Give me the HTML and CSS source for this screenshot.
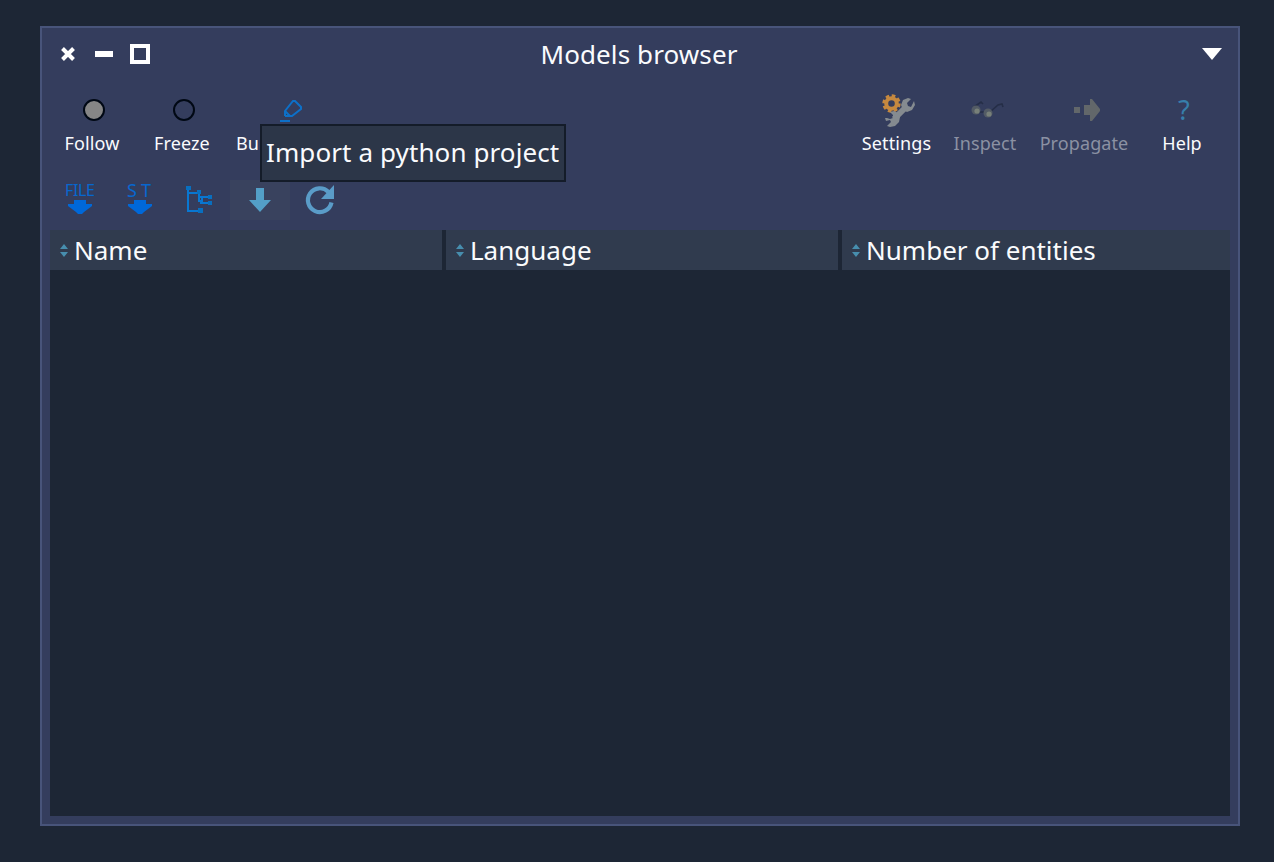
FILE: index.html
```
<!DOCTYPE html>
<html lang="en">
<head>
    <meta charset="UTF-8">
    <meta name="viewport" content="width=device-width, initial-scale=1.0">
    <title>Models browser</title>
    <link rel="stylesheet" href="styles.css">
</head>
<body>
    <div class="window">
        <header class="titlebar">
            <div class="window-controls">
                <svg width="16" height="16" viewBox="0 0 16 16"><path d="M2.500 2.500l11 11M13.500 2.500l-11 11" stroke="#fff" stroke-width="4"/></svg>
                <svg width="18" height="20" viewBox="0 0 18 20"><path d="M0 7h18v6H0z" fill="#fff"/></svg>
                <svg width="20" height="20" viewBox="0 0 20 20"><path d="M2 2h16v16H2z" fill="none" stroke="#fff" stroke-width="4"/></svg>
            </div>
            <h1>Models browser</h1>
            <svg class="window-menu" width="20" height="12" viewBox="0 0 20 12"><path d="M0 0h20L10 12z" fill="#fff"/></svg>
        </header>

        <nav class="toolbar">
            <button class="tool">
                <svg width="32" height="32" viewBox="0 0 32 32"><circle cx="16" cy="16" r="10" fill="#868686" stroke="#000814" stroke-width="2"/></svg>
                <span>Follow</span>
            </button>
            <button class="tool">
                <svg width="32" height="32" viewBox="0 0 32 32"><circle cx="16" cy="16" r="10" fill="none" stroke="#000814" stroke-width="2"/></svg>
                <span>Freeze</span>
            </button>
            <button class="tool tool-bus">
                <svg width="32" height="32" viewBox="0 0 32 32" fill="none" stroke="#0d70c8" stroke-width="2"><path d="M10 22v-5l8-10h2l6 6v2l-9 7h-7M10 17l5 5M5 27h10"/></svg>
                <span>Bu</span>
            </button>

            <button class="tool tool-right tool-settings">
                <svg width="34" height="34" viewBox="0 0 34 34">
                    <circle cx="9.500" cy="9.500" r="5.300" fill="none" stroke="#c6893f" stroke-width="4"/>
                    <circle cx="9.500" cy="9.500" r="7.900" fill="none" stroke="#c6893f" stroke-width="2.600" stroke-dasharray="3.600 2.605"/>
                    <path d="M12 25L25 12" stroke="#858b90" stroke-width="6"/>
                    <path d="M32 7l1 4-3 5-5 2-4-2-2-5 2-5 5-2 3 1-4 4 1 3 3 1zM5 24l3 1 3-1v-3l-3-3 4-1 4 2 2 4-1 5-4 4-5 1-3-1 4-4-1-2-4 1-1-3z" fill="#858b90"/>
                </svg>
                <span>Settings</span>
            </button>
            <button class="tool disabled">
                <svg width="34" height="32" viewBox="0 0 34 32">
                    <path d="M4 13l7-5 2 2M9 18h6M20 18l8-7 4-1 1 3" fill="none" stroke="#252e47" stroke-width="1.600"/>
                    <circle cx="6" cy="16" r="4.500" fill="#535b65"/><circle cx="18" cy="19" r="4.500" fill="#535b65"/>
                    <circle cx="7" cy="17" r="2.600" fill="#788079"/><circle cx="19" cy="20" r="2.600" fill="#788079"/>
                </svg>
                <span>Inspect</span>
            </button>
            <button class="tool tool-wide disabled">
                <svg width="32" height="32" viewBox="0 0 32 32"><path d="M4 13h6v6H4zM14 11h6V5h2l8 10v2l-8 10h-2v-6h-6z" fill="#62676a"/></svg>
                <span>Propagate</span>
            </button>
            <button class="tool tool-help">
                <b class="question">?</b>
                <span>Help</span>
            </button>
        </nav>

        <nav class="actions">
            <button class="action">
                <svg width="40" height="44" viewBox="-4 -6 40 44">
                    <text class="icon-text" x="1" y="12" textLength="30" lengthAdjust="spacing">FILE</text>
                    <path d="M10 16h12v4h6v2l-8 6-2 2h-4l-2-2-8-6v-2h6z" fill="#0068d9"/>
                </svg>
            </button>
            <button class="action">
                <svg width="40" height="44" viewBox="-4 -6 40 44">
                    <text class="icon-text wide" x="3" y="13">ST</text>
                    <path d="M10 16h12v4h6v2l-8 6-2 2h-4l-2-2-8-6v-2h6z" fill="#0068d9"/>
                </svg>
            </button>
            <button class="action">
                <svg width="32" height="32" viewBox="0 0 32 32">
                    <path d="M4 4v23h15M4 9h11M15 8v9h3M16 13h11M16 19h11M18 13v6" fill="none" stroke="#0877d2" stroke-width="2"/>
                    <path d="M2 2h5v4H2zM13 6h4v4h-4zM14 24h5v5h-5zM24 11h4v4h-4zM24 17h4v4h-4z" fill="#086fc0"/>
                </svg>
            </button>
            <button class="action hovered">
                <svg width="32" height="32" viewBox="0 0 32 32"><path d="M12 4h8v12h7L16 28 5 16h7z" fill="#539fc7"/></svg>
                <span class="tooltip">Import a python project</span>
            </button>
            <button class="action">
                <svg width="32" height="32" viewBox="0 0 32 32">
                    <path d="M27.500 18.500A11.900 11.900 0 1 1 24.500 8" fill="none" stroke="#5a9cc8" stroke-width="4.200"/>
                    <path d="M30 1v14H17z" fill="#5a9cc8"/>
                </svg>
            </button>
        </nav>

        <main class="models">
            <div class="models-header">
                <div class="column">
                    <svg width="8" height="16" viewBox="0 0 8 16"><path d="M0 7l4-5 4 5zM0 10h8l-4 5z" fill="#478eae"/></svg>
                    Name
                </div>
                <div class="column">
                    <svg width="8" height="16" viewBox="0 0 8 16"><path d="M0 7l4-5 4 5zM0 10h8l-4 5z" fill="#478eae"/></svg>
                    Language
                </div>
                <div class="column">
                    <svg width="8" height="16" viewBox="0 0 8 16"><path d="M0 7l4-5 4 5zM0 10h8l-4 5z" fill="#478eae"/></svg>
                    Number of entities
                </div>
            </div>
        </main>
    </div>
</body>
</html>
```
FILE: styles.css
```
:root {
    --desktop: #1d2635;
    --panel: #343d5d;
    --border: #48547a;
    --header: #303b4e;
    --text: #fafbfd;
}

* {
    margin: 0;
    padding: 0;
    box-sizing: border-box;
}

body {
    height: 100vh;
    padding: 26px 34px 36px 40px;
    background: var(--desktop);
    color: var(--text);
    font-family: "Noto Sans", sans-serif;
    overflow: hidden;
}

svg {
    display: block;
    flex: none;
}

button {
    border: none;
    background: none;
    color: inherit;
    font: inherit;
}

.window {
    display: flex;
    flex-direction: column;
    height: 100%;
    padding: 0 8px 8px;
    border: 2px solid var(--border);
    background: var(--panel);
}

.titlebar {
    display: grid;
    grid-template-columns: 1fr auto 1fr;
    align-items: center;
    height: 52px;
    padding: 0 8px 0 10px;
}

.titlebar h1 {
    margin-right: 4px;
    font-size: 26px;
    font-weight: 400;
    line-height: 36px;
    letter-spacing: 0.1px;
}

.window-controls {
    display: flex;
    align-items: center;
    gap: 17px;
}

.window-controls svg:first-child {
    margin-right: 2px;
}

.window-menu {
    justify-self: end;
}

.toolbar {
    display: flex;
    height: 100px;
    padding: 14px 4px 0 0;
    margin-left: -3px;
}

.tool {
    display: flex;
    flex-direction: column;
    align-items: center;
    width: 90px;
    font-size: 18px;
    line-height: 26px;
    letter-spacing: 0.1px;
}

.tool svg {
    height: 32px;
    margin-left: 4px;
}

.tool span {
    margin-top: 4px;
}

.tool-bus {
    width: 124px;
}

.tool-bus span {
    align-self: flex-start;
    margin-left: 9px;
}

.tool-right {
    margin-left: auto;
}

.tool-settings {
    width: 87px;
}

.tool-settings svg {
    height: 34px;
    margin-bottom: -2px;
}

.tool-wide {
    width: 108px;
}

.tool-help {
    width: 88px;
}

.question {
    height: 32px;
    margin-left: 4px;
    color: #377fab;
    font-size: 27px;
    font-weight: 400;
    line-height: 31px;
}

.disabled span {
    color: #8b91a3;
}

.actions {
    display: flex;
    height: 50px;
}

.action {
    position: relative;
    display: flex;
    align-items: center;
    justify-content: center;
    width: 60px;
    height: 40px;
}

.icon-text {
    fill: #0767cf;
    font-size: 16px;
}

.icon-text.wide {
    font-size: 18px;
    letter-spacing: 4px;
}

.hovered {
    background: #39425e;
}

.tooltip {
    position: absolute;
    left: 30px;
    bottom: 38px;
    height: 58px;
    padding: 0 5px 0 4px;
    border: 2px solid #141c29;
    background: #2c3648;
    font-size: 26px;
    line-height: 52px;
    letter-spacing: 0.1px;
    white-space: nowrap;
}

.models {
    flex: 1;
    background: var(--desktop);
}

.models-header {
    display: grid;
    grid-template-columns: 392px 392px 1fr;
    gap: 4px;
    height: 40px;
}

.column {
    display: flex;
    align-items: center;
    gap: 6px;
    padding: 0 10px;
    background: var(--header);
    font-size: 26px;
    line-height: 40px;
}
```
